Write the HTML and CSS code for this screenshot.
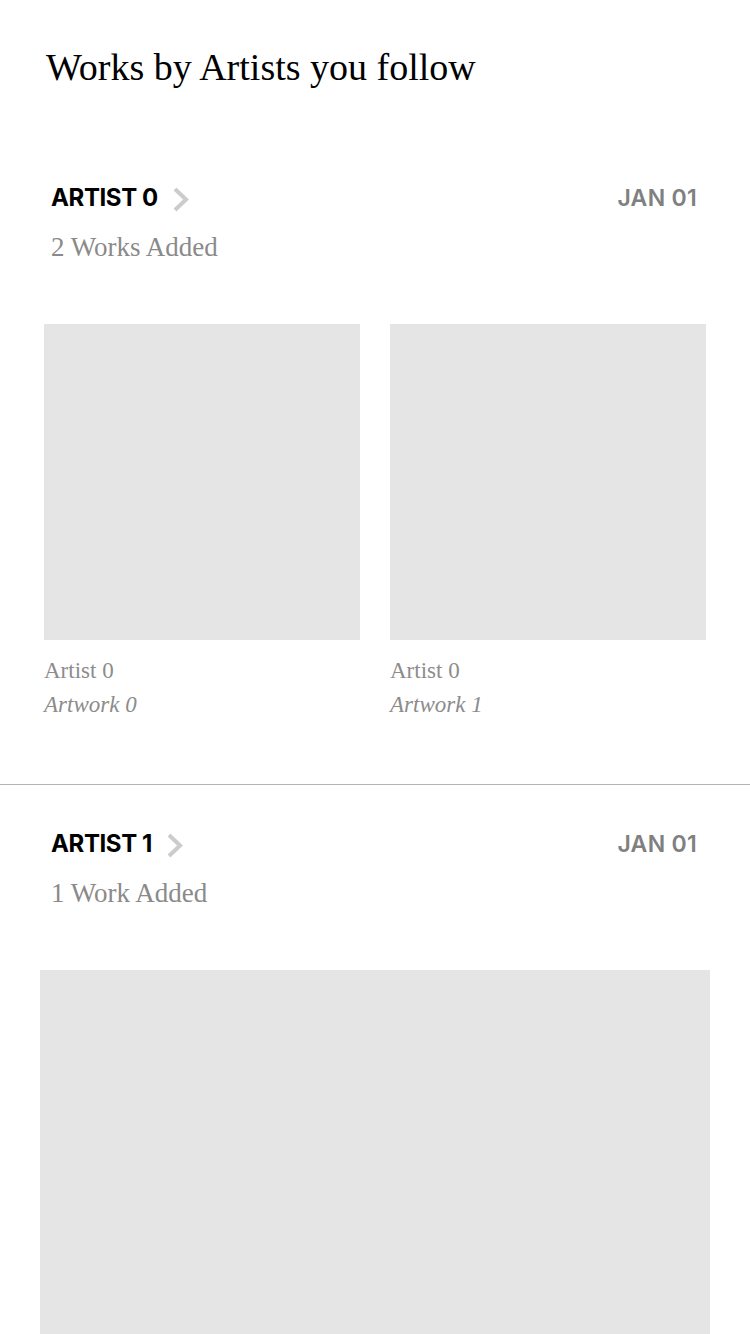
FILE: index.html
```html
<!DOCTYPE html>
<html lang="en">
<head>
<meta charset="utf-8">
<title>Works by Artists you follow</title>
<link rel="stylesheet" href="styles.css">
</head>
<body>
<main class="feed">
  <h1 class="feed-title">Works by Artists you follow</h1>

  <section class="artist-block">
    <header class="artist-head">
      <a class="artist-link" href="#">
        <span class="artist-name">ARTIST 0</span>
        <svg class="chevron" width="17" height="25" viewBox="0 0 17 25" aria-hidden="true"><path d="M3 2 L14 12.5 L3 23" fill="none" stroke="#cccccc" stroke-width="4"/></svg>
      </a>
      <span class="artist-date">JAN 01</span>
    </header>
    <p class="artist-count">2 Works Added</p>
    <div class="works works-two">
      <figure class="work">
        <div class="work-image"></div>
        <figcaption class="work-caption">
          <span class="work-artist">Artist 0</span>
          <span class="work-title">Artwork 0</span>
        </figcaption>
      </figure>
      <figure class="work">
        <div class="work-image"></div>
        <figcaption class="work-caption">
          <span class="work-artist">Artist 0</span>
          <span class="work-title">Artwork 1</span>
        </figcaption>
      </figure>
    </div>
  </section>

  <section class="artist-block">
    <header class="artist-head">
      <a class="artist-link" href="#">
        <span class="artist-name">ARTIST 1</span>
        <svg class="chevron" width="17" height="25" viewBox="0 0 17 25" aria-hidden="true"><path d="M3 2 L14 12.5 L3 23" fill="none" stroke="#cccccc" stroke-width="4"/></svg>
      </a>
      <span class="artist-date">JAN 01</span>
    </header>
    <p class="artist-count">1 Work Added</p>
    <div class="works works-one">
      <figure class="work">
        <div class="work-image work-image-large"></div>
      </figure>
    </div>
  </section>
</main>
</body>
</html>
```
FILE: styles.css
```css
html, body {
  margin: 0;
  padding: 0;
  background: #ffffff;
}

body {
  font-family: "Liberation Serif", "Times New Roman", serif;
  color: #000000;
  height: 1334px;
  overflow: hidden;
}

.feed {
  display: flex;
  flex-direction: column;
}

.feed-title {
  margin: 0;
  padding: 45px 0 0 46px;
  font-weight: 400;
  font-size: 38px;
  line-height: 44px;
  margin-bottom: 50px;
}

.artist-block {
  padding-top: 44px;
  padding-bottom: 62px;
  border-bottom: 1px solid #b3b3b3;
}

.artist-block:last-child {
  border-bottom: none;
  padding-bottom: 0;
}

.artist-head {
  display: flex;
  justify-content: space-between;
  align-items: center;
  padding: 0 53px 0 51px;
  height: 30px;
}

.artist-link {
  display: flex;
  align-items: center;
  gap: 14px;
  text-decoration: none;
  color: #000000;
}

.artist-name {
  font-family: Inter, "Liberation Sans", sans-serif;
  font-weight: 700;
  font-size: 24px;
  line-height: 30px;
  letter-spacing: -0.4px;
}

.chevron {
  display: block;
  margin-top: 2px;
}

.artist-date {
  font-family: Inter, "Liberation Sans", sans-serif;
  font-weight: 600;
  font-size: 23px;
  line-height: 30px;
  color: #808080;
  letter-spacing: 0.3px;
}

.artist-count {
  margin: 18px 0 0 51px;
  font-size: 27px;
  line-height: 32px;
  color: #8a8a8a;
}

.works {
  margin-top: 61px;
}

.works-two {
  display: grid;
  grid-template-columns: 316px 316px;
  column-gap: 30px;
  padding: 0 44px;
}

.works-one {
  padding: 0 40px;
}

.work {
  margin: 0;
}

.work-image {
  background: #e5e5e5;
  aspect-ratio: 1 / 1;
}

.work-image-large {
  height: 670px;
}

.work-caption {
  display: flex;
  flex-direction: column;
  margin-top: 14px;
  font-size: 23px;
  line-height: 34px;
  color: #8c8c8c;
}

.work-title {
  font-style: italic;
}
```
